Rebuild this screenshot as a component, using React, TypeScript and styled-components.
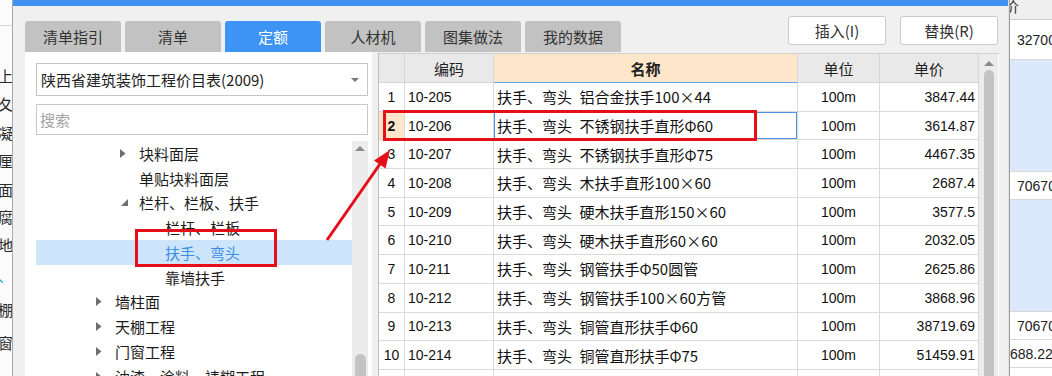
import React from 'react';
import styled, { createGlobalStyle } from 'styled-components';

const GlobalStyle = createGlobalStyle`
  html, body {
    margin: 0;
    padding: 0;
  }
  body {
    width: 1052px;
    height: 376px;
    overflow: hidden;
    background: #fff;
    font-family: "Noto Sans CJK SC", sans-serif;
  }
  * {
    box-sizing: border-box;
  }
`;

const Screen = styled.div`
  position: relative;
  display: flex;
  width: 1052px;
  height: 376px;
  overflow: hidden;
`;

/* strip of the window behind, on the left */
const LeftStrip = styled.div`
  width: 13px;
  flex: none;
  display: flex;
  flex-direction: column;
  background: #fbfbfb;
  border-right: 1px solid #a9a9a9;
  overflow: hidden;
`;

const LeftStripHead = styled.div`
  height: 26px;
  flex: none;
  border-bottom: 1px solid #d4d4d4;
`;

const StripChar = styled.div<{ $h: number; $tint?: boolean }>`
  height: ${(p) => p.$h}px;
  flex: none;
  display: flex;
  align-items: center;
  margin-left: -2px;
  font-size: 15px;
  line-height: 1;
  white-space: nowrap;
  color: ${(p) => (p.$tint ? '#3aa6b8' : '#2a2a2a')};
`;

const Dialog = styled.div`
  width: 996px;
  flex: none;
  display: flex;
  flex-direction: column;
  background: #f0f0f0;
  border-right: 1px solid #e2e2e2;
`;

const TitleBar = styled.div`
  height: 6px;
  flex: none;
  background: #3f92f2;
`;

const Toolbar = styled.div`
  height: 46px;
  flex: none;
  display: flex;
  align-items: flex-end;
  padding: 0 10px 0 12px;
`;

const Tabs = styled.div`
  display: flex;
  gap: 4px;
`;

const Tab = styled.div<{ $active?: boolean }>`
  width: 96px;
  height: 31px;
  display: flex;
  align-items: center;
  justify-content: center;
  border-radius: 3px 3px 0 0;
  font-size: 15px;
  background: ${(p) => (p.$active ? '#3d94f5' : '#c2c2c2')};
  color: ${(p) => (p.$active ? '#fff' : '#333')};
`;

const Buttons = styled.div`
  margin-left: auto;
  align-self: flex-start;
  margin-top: 10px;
  display: flex;
  gap: 14px;
`;

const Button = styled.div`
  width: 98px;
  height: 29px;
  display: flex;
  align-items: center;
  justify-content: center;
  background: #fff;
  border: 1px solid #cbcbcb;
  border-radius: 3px;
  font-size: 15px;
  color: #333;
`;

const Main = styled.div`
  flex: 1;
  min-height: 0;
  display: flex;
  gap: 6px;
  padding: 0 10px 0 12px;
`;

const LeftPanel = styled.div`
  width: 347px;
  flex: none;
  display: flex;
  flex-direction: column;
  background: #fff;
  padding: 11px 4px 0 11px;
`;

const Combo = styled.div`
  height: 33px;
  flex: none;
  display: flex;
  align-items: center;
  justify-content: space-between;
  padding: 0 8px 0 4px;
  border: 1px solid #c6c6c6;
  font-size: 15px;
  color: #222;
`;

const Search = styled.div`
  margin-top: 8px;
  height: 31px;
  flex: none;
  display: flex;
  align-items: center;
  padding-left: 3px;
  border: 1px solid #c9c9c9;
  font-size: 15px;
  color: #a3a3a3;
`;

const Tree = styled.div`
  margin-top: 6px;
  flex: 1;
  min-height: 0;
  display: flex;
  overflow: hidden;
`;

const TreeList = styled.div`
  flex: 1;
  display: flex;
  flex-direction: column;
`;

const TreeRow = styled.div<{ $indent: number; $selected?: boolean }>`
  height: 24.75px;
  flex: none;
  display: flex;
  align-items: center;
  padding-left: ${(p) => p.$indent}px;
  font-size: 15px;
  white-space: nowrap;
  background: ${(p) => (p.$selected ? '#cce5fb' : 'transparent')};
  color: ${(p) => (p.$selected ? '#3c8de4' : '#1c1c1c')};
`;

const Toggle = styled.span`
  width: 19px;
  flex: none;
  display: flex;
  align-items: center;
`;

const ScrollTrack = styled.div<{ $w: number }>`
  width: ${(p) => p.$w}px;
  flex: none;
  display: flex;
  flex-direction: column;
  align-items: center;
  background: #ececec;
`;

const ScrollArrow = styled.div<{ $top: number }>`
  margin-top: ${(p) => p.$top}px;
  width: 0;
  height: 0;
  border-left: 5px solid transparent;
  border-right: 5px solid transparent;
  border-bottom: 5px solid #8a8a8a;
`;

const ScrollThumb = styled.div<{ $top: number; $w: number }>`
  margin-top: ${(p) => p.$top}px;
  width: ${(p) => p.$w}px;
  height: 400px;
  flex: none;
  border-radius: 6px;
  background: #c3c3c3;
`;

const TablePanel = styled.div`
  width: 621px;
  flex: none;
  margin-top: 1px;
  display: flex;
  background: #fff;
  border-left: 1px solid #bdbdbd;
  border-top: 1px solid #cfcfcf;
`;

const Grid = styled.div`
  width: 600px;
  flex: none;
  display: flex;
  flex-direction: column;
`;

const GridRow = styled.div<{ $h: number }>`
  height: ${(p) => p.$h}px;
  flex: none;
  display: grid;
  grid-template-columns: 26px 89px 304px 82px 99px;
`;

const HeadCell = styled.div<{ $active?: boolean }>`
  display: flex;
  align-items: center;
  justify-content: center;
  font-size: 15px;
  color: #222;
  font-weight: ${(p) => (p.$active ? 700 : 400)};
  background: ${(p) => (p.$active ? '#fde6c9' : '#e9e9e9')};
  border-right: 1px solid #d6d6d6;
  border-bottom: 1px solid ${(p) => (p.$active ? '#6aa6ee' : '#d6d6d6')};
`;

const Cell = styled.div<{
  $align?: 'left' | 'center' | 'right';
  $num?: boolean;
  $current?: boolean;
  $focus?: boolean;
}>`
  display: flex;
  align-items: center;
  justify-content: ${(p) =>
    p.$align === 'center' ? 'center' : p.$align === 'right' ? 'flex-end' : 'flex-start'};
  padding: 0 3px;
  white-space: pre;
  overflow: hidden;
  color: #111;
  font-family: ${(p) =>
    p.$num ? '"Liberation Sans", "Noto Sans CJK SC", sans-serif' : '"Noto Sans CJK SC", "Liberation Sans", sans-serif'};
  font-size: ${(p) => (p.$num ? 14 : 15)}px;
  font-weight: ${(p) => (p.$current ? 700 : 400)};
  background: ${(p) => (p.$current ? '#fde6c9' : '#fff')};
  border-right: 1px solid #dadada;
  border-bottom: 1px solid #dadada;
  box-shadow: ${(p) => (p.$focus ? 'inset 0 0 0 1px #4c93e8' : 'none')};
`;

const RightStrip = styled.div`
  flex: 1;
  display: flex;
  flex-direction: column;
  border-left: 1px solid #9c9c9c;
  overflow: hidden;
`;

const StripHead = styled.div`
  height: 20px;
  flex: none;
  display: flex;
  align-items: flex-start;
  background: #efefef;
  border-bottom: 1px solid #cfcfcf;
  font-size: 15px;
  line-height: 12px;
  color: #333;
  overflow: hidden;
`;

const StripRow = styled.div<{ $h: number; $blue?: boolean; $flush?: boolean }>`
  height: ${(p) => p.$h}px;
  flex: none;
  display: flex;
  align-items: center;
  padding-left: ${(p) => (p.$flush ? 0 : 7)}px;
  background: ${(p) => (p.$blue ? '#dce8fb' : '#fff')};
  border-bottom: 1px solid #d8d8d8;
  font-family: "Liberation Sans", sans-serif;
  font-size: 14px;
  color: #222;
  white-space: nowrap;
`;

const Overlay = styled.svg`
  position: absolute;
  left: 0;
  top: 0;
  pointer-events: none;
`;

const tabs = ['清单指引', '清单', '定额', '人材机', '图集做法', '我的数据'];

const stripChars: [string, number][] = [
  ['', 35],
  ['上', 28],
  ['夂', 29],
  ['凝', 28],
  ['厘', 29],
  ['面', 28],
  ['腐', 27],
  ['地', 28],
  ['、', 34],
  ['棚', 35],
  ['窗', 30],
];

type Node = { label: string; level: 2 | 3 | 4; toggle?: 'open' | 'closed'; selected?: boolean };

const tree: Node[] = [
  { label: '块料面层', level: 3, toggle: 'closed' },
  { label: '单贴块料面层', level: 3 },
  { label: '栏杆、栏板、扶手', level: 3, toggle: 'open' },
  { label: '栏杆、栏板', level: 4 },
  { label: '扶手、弯头', level: 4, selected: true },
  { label: '靠墙扶手', level: 4 },
  { label: '墙柱面', level: 2, toggle: 'closed' },
  { label: '天棚工程', level: 2, toggle: 'closed' },
  { label: '门窗工程', level: 2, toggle: 'closed' },
  { label: '油漆、涂料、裱糊工程', level: 2, toggle: 'closed' },
];

const indents = { 2: 60, 3: 84, 4: 110 };

// the item names use an en space after 扶手、弯头, as the wide gap in the grid
const rows = [
  { n: 1, code: '10-205', name: '扶手、弯头\u2002铝合金扶手100×44', price: '3847.44' },
  { n: 2, code: '10-206', name: '扶手、弯头\u2002不锈钢扶手直形Φ60', price: '3614.87' },
  { n: 3, code: '10-207', name: '扶手、弯头\u2002不锈钢扶手直形Φ75', price: '4467.35' },
  { n: 4, code: '10-208', name: '扶手、弯头\u2002木扶手直形100×60', price: '2687.4' },
  { n: 5, code: '10-209', name: '扶手、弯头\u2002硬木扶手直形150×60', price: '3577.5' },
  { n: 6, code: '10-210', name: '扶手、弯头\u2002硬木扶手直形60×60', price: '2032.05' },
  { n: 7, code: '10-211', name: '扶手、弯头\u2002钢管扶手Φ50圆管', price: '2625.86' },
  { n: 8, code: '10-212', name: '扶手、弯头\u2002钢管扶手100×60方管', price: '3868.96' },
  { n: 9, code: '10-213', name: '扶手、弯头\u2002铜管直形扶手Φ60', price: '38719.69' },
  { n: 10, code: '10-214', name: '扶手、弯头\u2002铜管直形扶手Φ75', price: '51459.91' },
  { n: 11, code: '10-215', name: '扶手、弯头\u2002钢管弯头Φ50', price: '1856.30' },
];

const stripRows: { h: number; blue?: boolean; text?: string; flush?: boolean }[] = [
  { h: 40, text: '32700' },
  { h: 112, blue: true },
  { h: 28, text: '70670' },
  { h: 112, blue: true },
  { h: 28, text: '70670' },
  { h: 28, text: '688.22', flush: true },
  { h: 40 },
];

function TreeToggle({ state }: { state?: 'open' | 'closed' }) {
  return (
    <Toggle>
      {state === 'closed' && (
        <svg width="6" height="9" viewBox="0 0 6 9">
          <polygon points="0,0 5.5,4.5 0,9" fill="#6f6f6f" />
        </svg>
      )}
      {state === 'open' && (
        <svg width="8" height="7" viewBox="0 0 8 7" style={{ marginLeft: 1 }}>
          <polygon points="7,0 7,7 0,7" fill="#6f6f6f" />
        </svg>
      )}
    </Toggle>
  );
}

export default function App() {
  return (
    <Screen>
      <GlobalStyle />

      <LeftStrip>
        <LeftStripHead />
        {stripChars.map(([c, h], i) => (
          <StripChar key={i} $h={h} $tint={c === '、'}>
            {c}
          </StripChar>
        ))}
      </LeftStrip>

      <Dialog>
        <TitleBar />
        <Toolbar>
          <Tabs>
            {tabs.map((t) => (
              <Tab key={t} $active={t === '定额'}>
                {t}
              </Tab>
            ))}
          </Tabs>
          <Buttons>
            <Button>插入(I)</Button>
            <Button>替换(R)</Button>
          </Buttons>
        </Toolbar>

        <Main>
          <LeftPanel>
            <Combo>
              <span>陕西省建筑装饰工程价目表(2009)</span>
              <svg width="8" height="4" viewBox="0 0 8 4">
                <polygon points="0,0 8,0 4,4" fill="#777" />
              </svg>
            </Combo>
            <Search>搜索</Search>
            <Tree>
              <TreeList>
                {tree.map((n) => (
                  <TreeRow key={n.label} $indent={indents[n.level]} $selected={n.selected}>
                    {n.toggle ? <TreeToggle state={n.toggle} /> : <Toggle />}
                    {n.label}
                  </TreeRow>
                ))}
              </TreeList>
              <ScrollTrack $w={16}>
                <ScrollArrow $top={5} />
                <ScrollThumb $top={203} $w={11} />
              </ScrollTrack>
            </Tree>
          </LeftPanel>

          <TablePanel>
            <Grid>
              <GridRow $h={29}>
                <HeadCell />
                <HeadCell>编码</HeadCell>
                <HeadCell $active>名称</HeadCell>
                <HeadCell>单位</HeadCell>
                <HeadCell>单价</HeadCell>
              </GridRow>
              {rows.map((r) => (
                <GridRow key={r.n} $h={28.7}>
                  <Cell $align="center" $num $current={r.n === 2}>
                    {r.n}
                  </Cell>
                  <Cell $num>{r.code}</Cell>
                  <Cell $focus={r.n === 2}>{r.name}</Cell>
                  <Cell $align="center" $num>
                    100m
                  </Cell>
                  <Cell $align="right" $num>
                    {r.price}
                  </Cell>
                </GridRow>
              ))}
            </Grid>
            <ScrollTrack $w={19}>
              <ScrollArrow $top={7} />
              <ScrollThumb $top={4} $w={10} />
            </ScrollTrack>
          </TablePanel>
        </Main>
      </Dialog>

      <RightStrip>
        <StripHead>
          <span style={{ marginLeft: -6 }}>价</span>
        </StripHead>
        {stripRows.map((r, i) => (
          <StripRow key={i} $h={r.h} $blue={r.blue} $flush={r.flush}>
            {r.text}
          </StripRow>
        ))}
      </RightStrip>

      <Overlay width="1052" height="376" viewBox="0 0 1052 376">
        <rect x="136.5" y="230.5" width="139" height="35" fill="none" stroke="#e50f1a" strokeWidth="3" />
        <rect x="384.5" y="111.5" width="371" height="28" fill="none" stroke="#e50f1a" strokeWidth="3" />
        <line x1="327" y1="240" x2="380" y2="164" stroke="#e50f1a" strokeWidth="3" />
        <polygon points="390,150 385.5,168.5 374,160.5" fill="#e50f1a" />
      </Overlay>
    </Screen>
  );
}
